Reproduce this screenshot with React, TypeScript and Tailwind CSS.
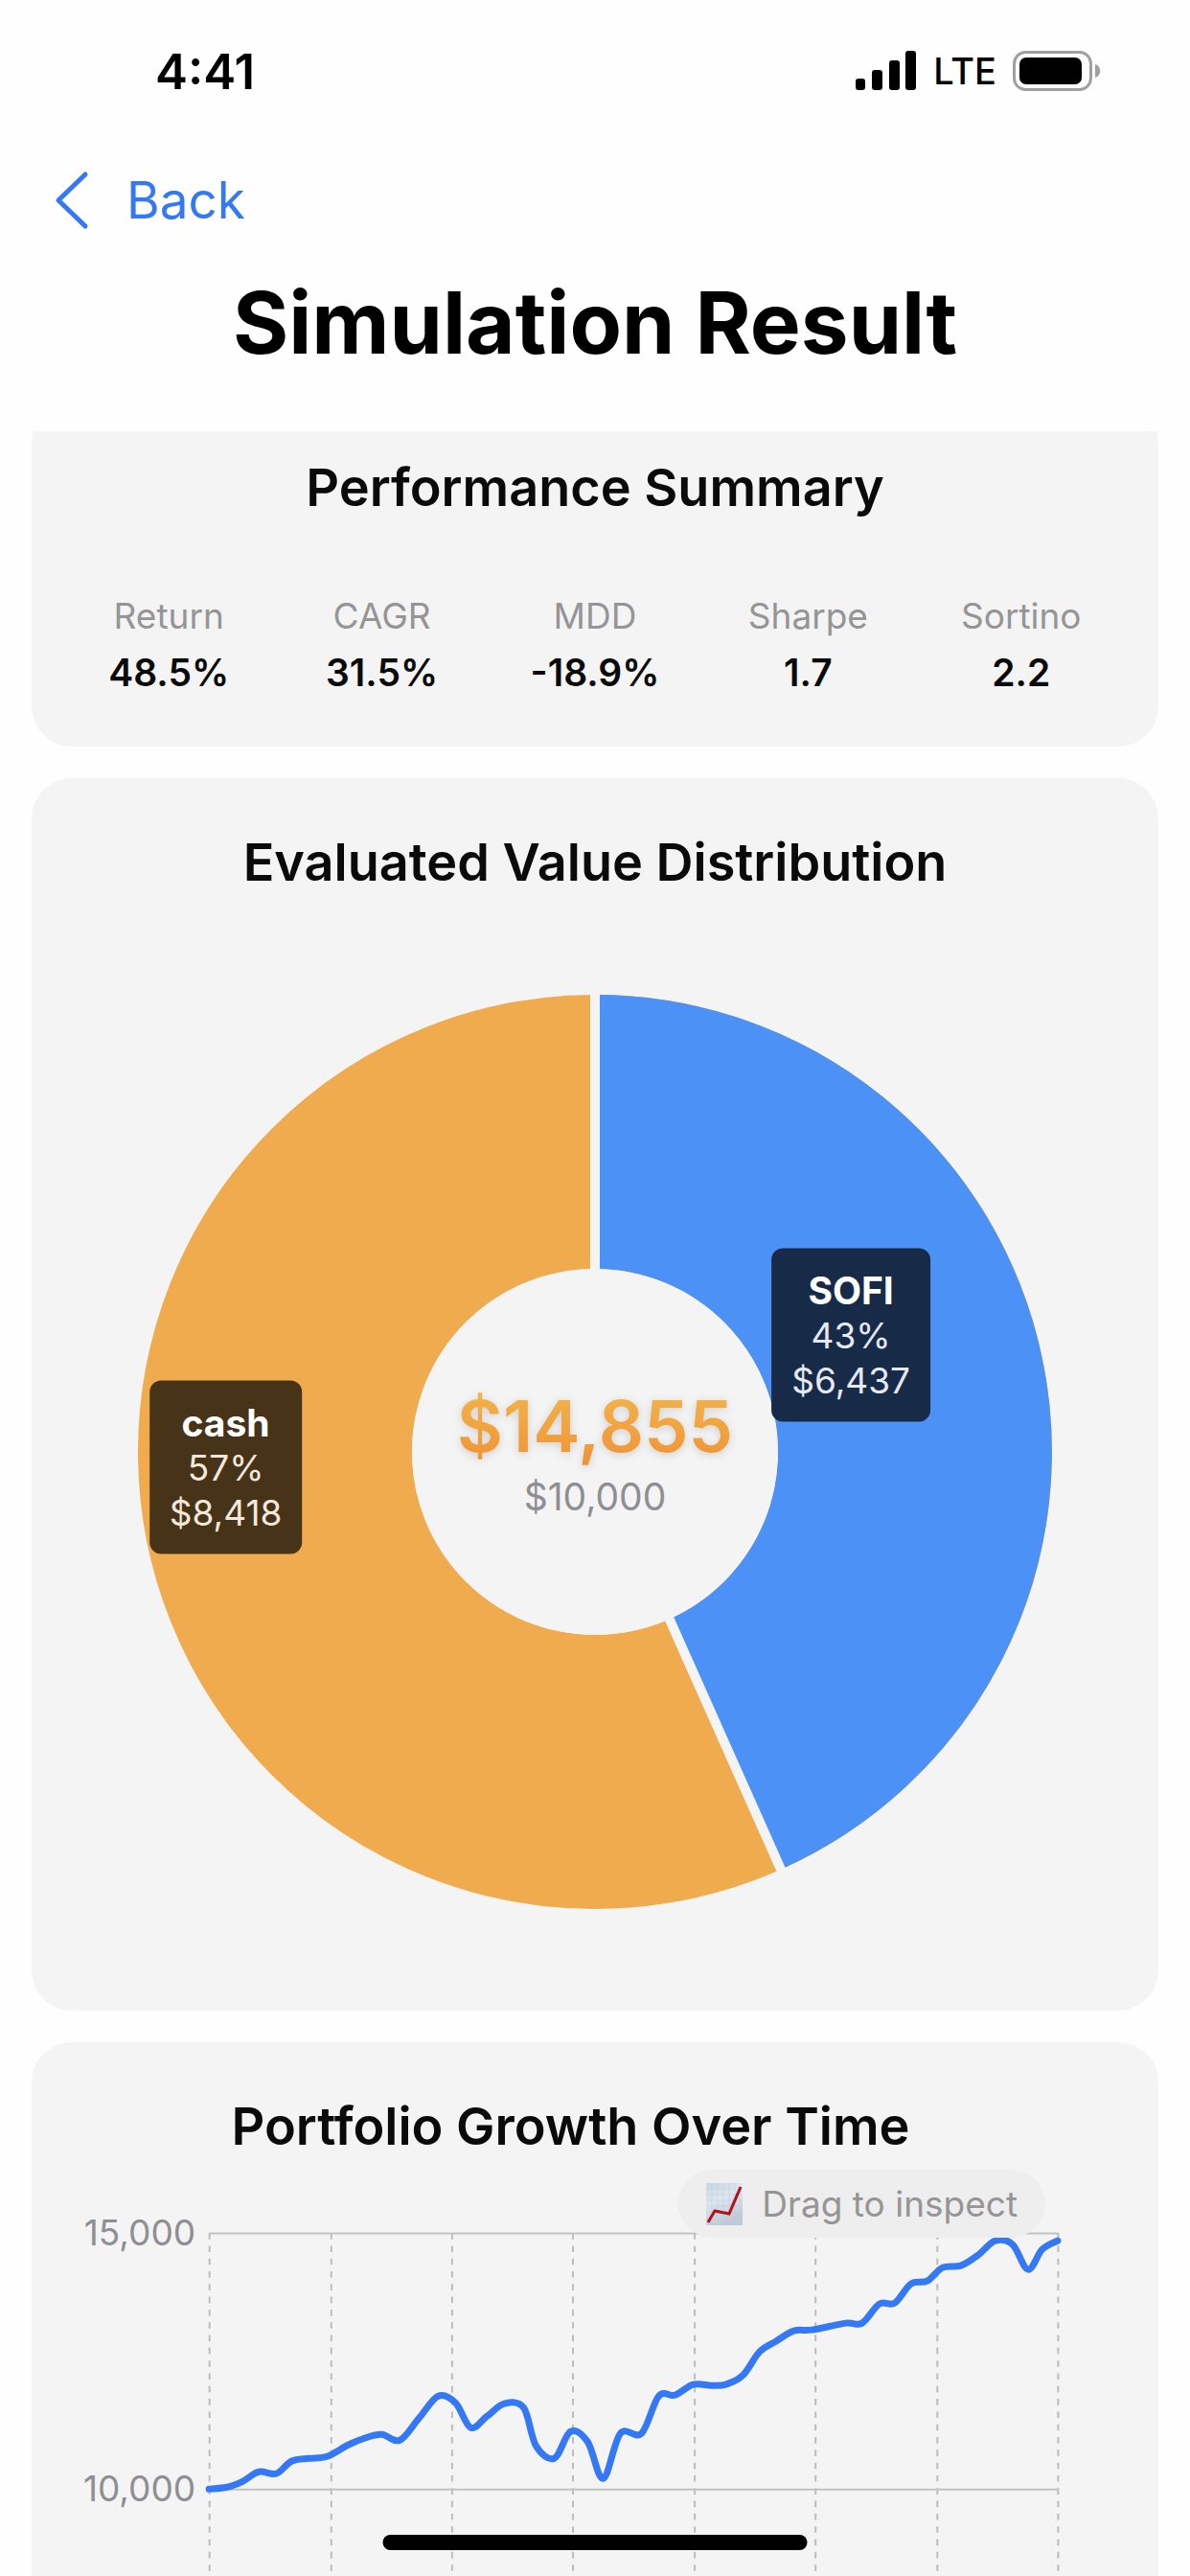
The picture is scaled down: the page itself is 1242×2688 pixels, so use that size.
const metrics = [
  { label: "Return", value: "48.5%" },
  { label: "CAGR", value: "31.5%" },
  { label: "MDD", value: "-18.9%" },
  { label: "Sharpe", value: "1.7" },
  { label: "Sortino", value: "2.2" }
];

const growth: [number, number][] = [
  [185, 346], [204, 344], [220, 338], [237, 328], [255, 330], [271, 317], [289, 314], [308, 312],
  [330, 300], [347, 293], [365, 289], [384, 295], [404, 272], [424, 249], [442, 256], [458, 282],
  [475, 270], [493, 257], [513, 261], [526, 301], [545, 314], [562, 286], [580, 297], [596, 335],
  [614, 288], [636, 288], [654, 249], [671, 248], [690, 237], [709, 238], [724, 237], [742, 227],
  [759, 203], [776, 192], [795, 181], [814, 180], [849, 173], [866, 173], [884, 153], [900, 152],
  [917, 132], [934, 129], [950, 115], [969, 113], [987, 102], [1005, 87], [1023, 91], [1039, 117],
  [1054, 96], [1070, 87]
];

const monthLines = [185, 312, 438, 564, 691, 817, 944, 1070];

// Catmull-Rom spline through the points
function smoothPath(points: [number, number][]) {
  let d = `M${points[0][0]} ${points[0][1]}`;
  for (let i = 0; i < points.length - 1; i++) {
    const p0 = points[i - 1] || points[i];
    const p1 = points[i];
    const p2 = points[i + 1];
    const p3 = points[i + 2] || p2;
    const c1 = [p1[0] + (p2[0] - p0[0]) / 6, p1[1] + (p2[1] - p0[1]) / 6];
    const c2 = [p2[0] - (p3[0] - p1[0]) / 6, p2[1] - (p3[1] - p1[1]) / 6];
    d += `C${c1[0]} ${c1[1]} ${c2[0]} ${c2[1]} ${p2[0]} ${p2[1]}`;
  }
  return d;
}

function StatusBar() {
  return (
    <div className="flex h-[148px] items-center justify-between pl-[162px] pr-[93px]">
      <span className="text-[51px] font-semibold leading-none">4:41</span>
      <div className="flex items-center gap-[17px]">
        <svg className="h-[42px] w-[64px]" viewBox="0 0 64 42" aria-hidden="true">
          <rect x="0" y="29" width="10" height="12" rx="3" />
          <rect x="17" y="20" width="11" height="21" rx="3" />
          <rect x="35" y="10" width="11" height="31" rx="3" />
          <rect x="52" y="0" width="11" height="41" rx="3" />
        </svg>
        <span className="text-[38px] font-medium leading-none">LTE</span>
        <svg className="h-[42px] w-[92px]" viewBox="0 0 92 42" aria-hidden="true">
          <rect x="1.5" y="1.5" width="80" height="39" rx="12" fill="none" stroke="#a0a0a0" strokeWidth="3" />
          <rect x="7" y="7" width="65" height="28" rx="7" />
          <path d="M86 14c7 2 7 12 0 14z" fill="#a0a0a0" />
        </svg>
      </div>
    </div>
  );
}

function Slice({ name, percent, amount, className }: { name: string; percent: string; amount: string; className: string }) {
  return (
    <div className={`absolute -translate-x-1/2 -translate-y-1/2 rounded-[12px] px-[21px] py-[20px] text-center leading-[47px] ${className}`}>
      <p className="text-[39px] font-bold text-white">{name}</p>
      <p className="text-[37px]">{percent}</p>
      <p className="text-[37px]">{amount}</p>
    </div>
  );
}

function PerformanceSummary() {
  return (
    <section className="-mt-[29px] rounded-[42px] bg-[#f4f4f4] px-[32px] pb-[53px] pt-[56px]">
      <h2 className="text-center text-[54px] font-semibold leading-[64px] text-[#0a0a0a]">Performance Summary</h2>
      <dl className="mt-[78px] grid grid-cols-5 text-center leading-[48px]">
        {metrics.map((item) => (
          <div key={item.label}>
            <dt className="text-[37px] text-[#959595]">{item.label}</dt>
            <dd className="mt-[11px] text-[39px] font-semibold text-[#0a0a0a]">{item.value}</dd>
          </div>
        ))}
      </dl>
    </section>
  );
}

function ValueDistribution() {
  return (
    <section className="rounded-[42px] bg-[#f4f4f4] px-[111px] pb-[106px] pt-[56px]">
      <h2 className="text-center text-[54px] font-semibold leading-[64px] text-[#0a0a0a]">Evaluated Value Distribution</h2>
      <div className="relative mt-[106px]">
        <svg className="block w-full" viewBox="-477 -477 954 954" aria-hidden="true">
          <circle r="334" fill="none" stroke="#efab4d" strokeWidth="286" />
          <path d="M0 -334A334 334 0 0 1 136 305" fill="none" stroke="#4c91f5" strokeWidth="286" />
          <path d="M0 -480V0L195 438" fill="none" stroke="#f4f4f4" strokeWidth="10" />
          <circle r="191" fill="#f4f4f4" />
        </svg>
        <div className="absolute inset-0 flex flex-col items-center justify-center pt-[6px]">
          <p className="bg-gradient-to-b from-[#f2b74c] to-[#ef9134] bg-clip-text text-[74px] font-semibold leading-[88px] text-transparent drop-shadow-[0_2px_5px_rgba(0,0,0,0.15)]">
            $14,855
          </p>
          <p className="text-[39px] leading-[60px] text-[#8e8e93]">$10,000</p>
        </div>
        <Slice name="SOFI" percent="43%" amount="$6,437" className="left-[78%] top-[37.2%] bg-[#172b49] text-[#e4e9f4]" />
        <Slice name="cash" percent="57%" amount="$8,418" className="left-[9.6%] top-[51.7%] bg-[#473317] text-[#f4e8dd]" />
      </div>
    </section>
  );
}

function PortfolioGrowth() {
  return (
    <section className="relative rounded-[42px] bg-[#f4f4f4] pt-[56px]">
      <h2 className="pr-[51px] text-center text-[54px] font-semibold leading-[64px] text-[#0a0a0a]">Portfolio Growth Over Time</h2>
      <svg className="block w-full" viewBox="0 0 1175 640" role="img" aria-label="Portfolio growth">
        {monthLines.map((x) => (
          <path key={x} d={`M${x + 0.5} 79V613`} stroke="#bcbcbc" strokeWidth="2" strokeDasharray="6.6 6.7" />
        ))}
        <path d="M185 79.5H1071M185 346.5H1071M185 613.5H1071" stroke="#c2c2c2" strokeWidth="2" />
        <g fill="#8e8e93" fontSize="37" textAnchor="end">
          <text x="171" y="92">15,000</text>
          <text x="171" y="359">10,000</text>
        </g>
        <path d={smoothPath(growth)} fill="none" stroke="#3478f6" strokeWidth="7" strokeLinecap="round" strokeLinejoin="round" />
      </svg>
      <div className="absolute right-[118px] top-[133px] flex h-[71px] items-center gap-[20px] rounded-full bg-[#eeeeee] px-[29px]">
        <svg className="h-[44px] w-[38px]" viewBox="0 0 38 44" aria-hidden="true">
          <defs>
            <linearGradient id="sheet" x1="0" y1="0" x2="0.4" y2="1">
              <stop offset="0" stopColor="#c8d6e3" />
              <stop offset="0.45" stopColor="#dfe8f1" />
              <stop offset="1" stopColor="#bfcad6" />
            </linearGradient>
          </defs>
          <rect width="38" height="44" fill="url(#sheet)" />
          <path d="M6 0V44M12 0V44M18 0V44M24 0V44M30 0V44M0 6H38M0 12H38M0 18H38M0 24H38M0 30H38M0 36H38" stroke="#b9cadb" strokeWidth="0.5" />
          <path d="M2 41L9 29L24 32L36 4" fill="none" stroke="#b01217" strokeWidth="3" />
        </svg>
        <span className="text-[37px] leading-none text-[#959595]">Drag to inspect</span>
      </div>
    </section>
  );
}

export default function App() {
  return (
    <div className="relative flex h-screen flex-col overflow-hidden bg-[#fefefe] font-['Inter',sans-serif] text-black">
      <header className="pb-[46px]">
        <StatusBar />
        <button type="button" className="flex h-[122px] items-center gap-[39px] pl-[56px] text-[#3478f6]">
          <svg className="h-[62px] w-[37px]" viewBox="0 0 37 62" fill="none" stroke="currentColor" strokeWidth="5" strokeLinecap="round" strokeLinejoin="round" aria-hidden="true">
            <path d="M33 4L5 31L33 58" />
          </svg>
          <span className="text-[53px] leading-none">Back</span>
        </button>
        <h1 className="text-center text-[89px] font-bold leading-[134px]">Simulation Result</h1>
      </header>
      <main className="flex min-h-0 flex-1 flex-col gap-[33px] overflow-hidden px-[33px] *:shrink-0">
        <PerformanceSummary />
        <ValueDistribution />
        <PortfolioGrowth />
      </main>
      <div className="absolute bottom-[27px] left-1/2 h-[16px] w-[443px] -translate-x-1/2 rounded-full bg-black" />
    </div>
  );
}
